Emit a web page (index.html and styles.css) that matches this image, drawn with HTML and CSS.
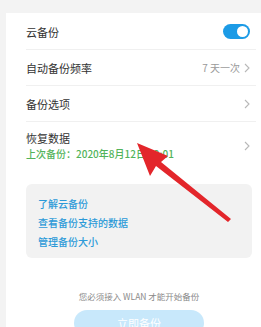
FILE: index.html
```html
<!DOCTYPE html>
<html lang="zh">
<head>
<meta charset="utf-8">
<link rel="stylesheet" href="styles.css">
</head>
<body>
<div class="card">
  <div class="row">
    <span class="title">云备份</span>
    <span class="toggle"><span class="knob"></span></span>
  </div>
  <div class="row">
    <span class="title">自动备份频率</span>
    <span class="right"><span class="value">7 天一次</span><svg class="chev" width="6" height="10" viewBox="0 0 6 10"><polyline points="1,1 5,5 1,9" fill="none" stroke="#b8b8b8" stroke-width="1.1"/></svg></span>
  </div>
  <div class="row">
    <span class="title">备份选项</span>
    <span class="right"><svg class="chev" width="6" height="10" viewBox="0 0 6 10"><polyline points="1,1 5,5 1,9" fill="none" stroke="#b8b8b8" stroke-width="1.1"/></svg></span>
  </div>
  <div class="row restore">
    <div class="texts">
      <div class="title">恢复数据</div>
      <div class="sub">上次备份：2020年8月12日 22:01</div>
    </div>
    <span class="right"><svg class="chev" width="6" height="10" viewBox="0 0 6 10"><polyline points="1,1 5,5 1,9" fill="none" stroke="#b8b8b8" stroke-width="1.1"/></svg></span>
  </div>
  <div class="links">
    <div class="link">了解云备份</div>
    <div class="link">查看备份支持的数据</div>
    <div class="link">管理备份大小</div>
  </div>
  <div class="note">您必须接入 WLAN 才能开始备份</div>
  <div class="btn">立即备份</div>
</div>
<svg class="arrow" width="261" height="327" viewBox="0 0 261 327">
  <polygon points="137,143 168,156 161,162 231,219 228,222 156,166 150,176" fill="#e3262b"/>
</svg>
</body>
</html>
```
FILE: styles.css
```css
html, body {
  margin: 0;
  padding: 0;
}
body {
  width: 261px;
  height: 327px;
  overflow: hidden;
  background: #f3f3f3;
  font-family: "Noto Sans CJK SC", "Noto Sans", sans-serif;
  position: relative;
}
.card {
  margin: 13px 0 0 6px;
  background: #ffffff;
  height: 314px;
  box-sizing: border-box;
  overflow: hidden;
  padding: 1px 9px 0 20px;
}
.row {
  display: flex;
  align-items: center;
  justify-content: space-between;
  height: 35px;
  border-bottom: 1px solid #f0f0f0;
  margin-right: -4px;
  padding-right: 6px;
}
.title {
  font-size: 11px;
  color: #333333;
  line-height: 14px;
}
.toggle {
  width: 27px;
  height: 15px;
  border-radius: 8px;
  background: #1c9be6;
  display: flex;
  align-items: center;
  justify-content: flex-end;
  padding-right: 2px;
  box-sizing: border-box;
}
.knob {
  width: 11px;
  height: 11px;
  border-radius: 50%;
  background: #ffffff;
}
.right {
  display: flex;
  align-items: center;
  gap: 4px;
}
.value {
  font-size: 10px;
  color: #9a9a9a;
}
.chev {
  display: block;
}
.row.restore {
  height: auto;
  border-bottom: none;
  padding-top: 9px;
  padding-bottom: 8px;
}
.sub {
  font-size: 10px;
  line-height: 14px;
  color: #52b35a;
  margin-top: 2px;
  font-weight: 500;
}
.links {
  margin-top: 15px;
  background: #f2f2f2;
  border-radius: 6px;
  padding: 10px 12px 7px 12px;
}
.link {
  font-size: 10px;
  line-height: 19px;
  color: #2c9ad8;
  font-weight: 500;
}
.note {
  margin-top: 32px;
  text-align: center;
  font-size: 8.5px;
  color: #8a8a8a;
  line-height: 12px;
}
.btn {
  margin: 8px auto 0 auto;
  width: 130px;
  height: 26px;
  border-radius: 13px;
  background: #c8e8fb;
  color: #ffffff;
  font-size: 11px;
  text-align: center;
  line-height: 26px;
}
.arrow {
  position: absolute;
  left: 0;
  top: 0;
  pointer-events: none;
}
```
